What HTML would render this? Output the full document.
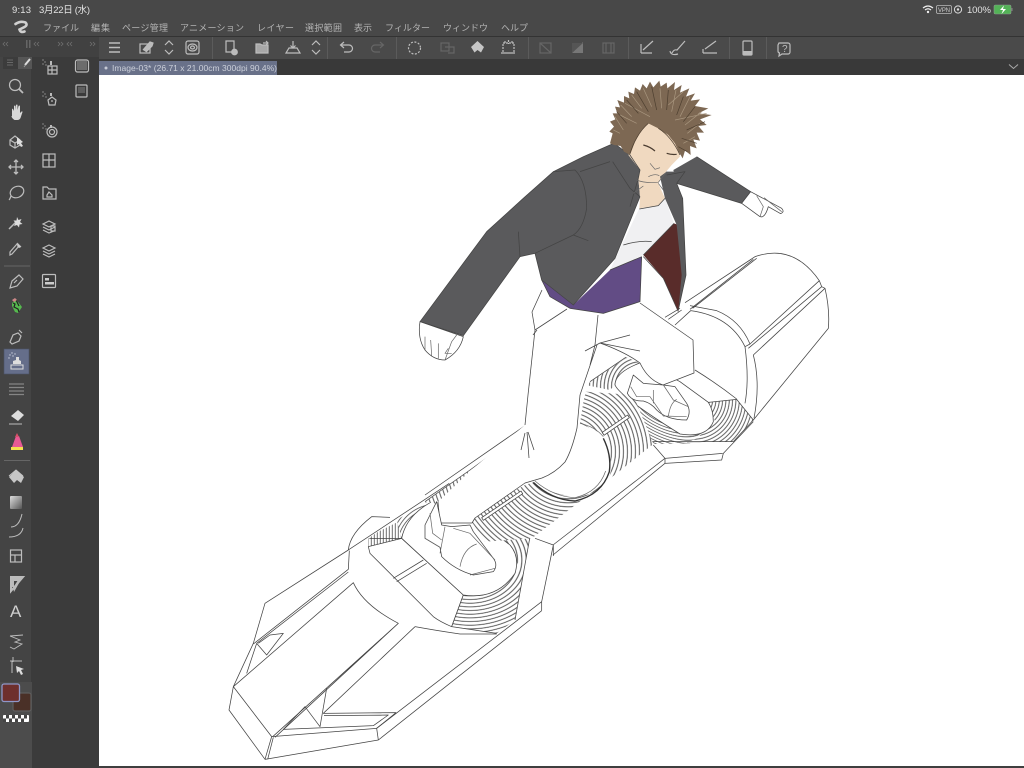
<!DOCTYPE html>
<html lang="ja"><head><meta charset="utf-8"><title>Clip Studio Paint</title>
<style>html,body{margin:0;padding:0;background:#3b3b3b;overflow:hidden}svg{display:block}
text{font-family:"Liberation Sans","Noto Sans CJK JP",sans-serif}
.i{fill:none;stroke:#bdbdbd;stroke-width:1.2}.d{fill:none;stroke:#666;stroke-width:1.2}.f{fill:#c4c4c4}
.b *{vector-effect:non-scaling-stroke}.b path,.b polygon{stroke:#444;stroke-width:.75;fill:none;stroke-linejoin:round}
.b .w{fill:#fff}.b .n{stroke:none}.b .l{stroke:#666;stroke-width:.7}</style></head><body>
<svg width="1024" height="768" viewBox="0 0 1024 768" xmlns="http://www.w3.org/2000/svg">
<defs>
<radialGradient id="r1" gradientUnits="userSpaceOnUse" cx="0" cy="0" r="8" spreadMethod="repeat" gradientTransform="translate(490 490) rotate(30) scale(1.9 1)"><stop offset=".5" stop-color="#fff"/><stop offset=".8" stop-color="#444"/><stop offset="1" stop-color="#fff"/></radialGradient>
<radialGradient id="r1b" gradientUnits="userSpaceOnUse" cx="580" cy="480" r="10" spreadMethod="repeat"><stop offset=".5" stop-color="#fff"/><stop offset=".8" stop-color="#444"/><stop offset="1" stop-color="#fff"/></radialGradient>
<radialGradient id="r1c" gradientUnits="userSpaceOnUse" cx="420" cy="440" r="11" spreadMethod="repeat"><stop offset=".5" stop-color="#fff"/><stop offset=".8" stop-color="#444"/><stop offset="1" stop-color="#fff"/></radialGradient>
<radialGradient id="r2" gradientUnits="userSpaceOnUse" cx="430" cy="170" r="12" spreadMethod="repeat"><stop offset=".55" stop-color="#fff"/><stop offset=".8" stop-color="#444"/><stop offset="1" stop-color="#fff"/></radialGradient>
<radialGradient id="r3" gradientUnits="userSpaceOnUse" cx="0" cy="0" r="11" spreadMethod="repeat" gradientTransform="translate(420 270) scale(1.2 1)"><stop offset=".55" stop-color="#fff"/><stop offset=".8" stop-color="#444"/><stop offset="1" stop-color="#fff"/></radialGradient>
<radialGradient id="r5" gradientUnits="userSpaceOnUse" cx="320" cy="230" r="10" spreadMethod="repeat"><stop offset=".55" stop-color="#fff"/><stop offset=".8" stop-color="#444"/><stop offset="1" stop-color="#fff"/></radialGradient>
<linearGradient id="l1" gradientUnits="userSpaceOnUse" x1="0" y1="0" x2="9" y2="0" spreadMethod="repeat"><stop offset=".5" stop-color="#fff"/><stop offset=".8" stop-color="#444"/><stop offset="1" stop-color="#fff"/></linearGradient>
<linearGradient id="gr" x1="0" y1="0" x2="1" y2="1"><stop offset="0" stop-color="#ddd"/><stop offset="1" stop-color="#555"/></linearGradient>
<filter id="sf" x="-5%" y="-5%" width="110%" height="110%"><feGaussianBlur stdDeviation=".35"/></filter>
</defs>

<!-- chrome -->
<rect width="1024" height="768" fill="#3b3b3b"/>
<rect width="1024" height="36" fill="#484848"/>
<rect y="36" width="1024" height="1" fill="#333"/>
<rect x="0" y="37" width="99" height="20" fill="#414141"/>
<rect x="99" y="37" width="925" height="22" fill="#4a4a4a"/>
<rect x="99" y="59" width="925" height="16" fill="#393939"/>
<rect x="0" y="57" width="31" height="711" fill="#444"/>
<rect x="31" y="57" width="68" height="711" fill="#3b3b3b"/>
<rect x="0" y="682" width="32" height="86" fill="#4c4c4c"/>
<rect x="99" y="75" width="925" height="691" fill="#fff"/>
<rect x="99" y="766" width="925" height="2" fill="#3f3f3f"/>

<!-- status bar -->
<text x="12" y="13" font-size="9.5" fill="#e2e2e2" textLength="19">9:13</text>
<text x="39" y="13" font-size="9.5" fill="#e2e2e2" textLength="51">3月22日 (水)</text>
<text x="967" y="13" font-size="9.5" fill="#e2e2e2" textLength="24">100%</text>
<path d="M923 8q5-4 10 0M925 10q3-2.500 6 0" fill="none" stroke="#eee" stroke-width="1.200"/><circle cx="928" cy="12" r="1.200" fill="#eee"/>
<rect x="936.500" y="5.500" width="15" height="8" rx="1.500" fill="none" stroke="#bbb" stroke-width=".8"/>
<text x="938" y="12" font-size="6" fill="#ccc" textLength="12">VPN</text>
<circle cx="958" cy="9.500" r="3.600" fill="none" stroke="#ddd"/><circle cx="958" cy="9.500" r="1.200" fill="#ddd"/>
<rect x="994" y="5" width="17" height="9" rx="1.500" fill="#53b257" stroke="#8a9a8a" stroke-width=".6"/><rect x="1011.500" y="8" width="1" height="3" fill="#888"/>
<path d="M1004 5.500l-4 4.500h3l-1.500 4 4.500-5h-3z" fill="#fff"/>

<!-- logo and menu -->
<path d="M15.500 24q5-3.500 10-1.500 2.500 2.500-1 4.500l-5 2.500q1 3.500 5 2" fill="none" stroke="#d0d0d0" stroke-width="2.600" stroke-linecap="round"/>
<g font-size="9" fill="#b4b4b4">
<text x="43" y="31" textLength="36">ファイル</text><text x="91" y="31" textLength="19">編集</text><text x="122" y="31" textLength="46">ページ管理</text><text x="180" y="31" textLength="64">アニメーション</text><text x="257" y="31" textLength="37">レイヤー</text><text x="305" y="31" textLength="37">選択範囲</text><text x="354" y="31" textLength="18">表示</text><text x="385" y="31" textLength="45">フィルター</text><text x="443" y="31" textLength="45">ウィンドウ</text><text x="501" y="31" textLength="27">ヘルプ</text>
</g>

<!-- panel headers -->
<g fill="none" stroke="#6f6f6f" stroke-width=".8">
<path d="M5 42l-2 2 2 2M8 42l-2 2 2 2M36 42l-2 2 2 2M39 42l-2 2 2 2M58 42l2 2-2 2M61 42l2 2-2 2M69 42l-2 2 2 2M72 42l-2 2 2 2M90 42l2 2-2 2M93 42l2 2-2 2"/>
</g>
<rect x="26" y="40" width="1.500" height="8" fill="#666"/><rect x="29" y="40" width="1.500" height="8" fill="#666"/>
<rect x="3" y="57" width="15" height="12" fill="#3c3c3c"/><rect x="18" y="57" width="14" height="12" fill="#565656"/>
<path d="M7 60h6M7 62.500h6M7 65h6" stroke="#777" stroke-width=".8"/>
<path d="M25 65l5-6" stroke="#ddd" stroke-width="2"/><path d="M24 67l1.500-2" stroke="#999" stroke-width="1"/>

<!-- toolbar -->
<g fill="#5b5b5b"><rect x="212" y="37" width="1" height="22"/><rect x="327" y="37" width="1" height="22"/><rect x="396" y="37" width="1" height="22"/><rect x="528" y="37" width="1" height="22"/><rect x="628" y="37" width="1" height="22"/><rect x="729" y="37" width="1" height="22"/><rect x="766" y="37" width="1" height="22"/></g>
<g class="i">
<path d="M109 43h11M109 47.500h11M109 52h11" stroke-width="1.500"/>
<rect x="140" y="44" width="10" height="9"/><path d="M143 50l7-8 3 1-1 3-6 6" fill="#bbb"/>
<path d="M165 45l4-4 4 4M165 50l4 4 4-4"/>
<rect x="186" y="41" width="13" height="13" rx="2"/><ellipse cx="192.500" cy="47.500" rx="4.500" ry="3.500"/><ellipse cx="192.500" cy="47.500" rx="2" ry="1.500"/>
<path d="M232 52h-6V41h8v8"/><circle cx="234.500" cy="52" r="2.800" fill="#bbb"/>
<path d="M256 44v9h12v-8h-6l-2-1z" fill="#a8a8a8"/><path d="M263 43h5m-2-2l2 2-2 2"/>
<path d="M286 53h14l-3-5h-8zM293 41v7m-2.500-2.500l2.500 2.500 2.500-2.500"/>
<path d="M312 45l4-4 4 4M312 50l4 4 4-4"/>
<path d="M341 45h8a3.500 3.500 0 010 7h-5M344 42l-3.500 3 3.500 3"/>
</g>
<g class="d"><path d="M383 45h-8a3.500 3.500 0 000 7h5M380 42l3.500 3-3.500 3"/>
<rect x="441" y="43" width="8" height="8"/><path d="M445 47h9v6h-6"/>
<rect x="540" y="43" width="11" height="10"/><path d="M540 43l11 10"/>
<rect x="603" y="43" width="11" height="10"/><path d="M606 43v10M611 43v10"/></g>
<path d="M572 53l11-11v11z" fill="#777"/><path d="M572 43h11l-11 10z" fill="#555"/>
<g class="i">
<circle cx="414.500" cy="48" r="6" stroke-dasharray="2 1.500"/>
<path d="M503 43h11v10h-11zM508.500 40v4M501 53h15M505 43v-3M512 43v-3" stroke-dasharray="2 1"/>
<path d="M641 53V44M641 53h11M643 50l10-9"/>
<path d="M672 53q2-4 5-3l8-9M670 51q1 5 8 3" />
<path d="M703 53h14M705 49l11-8M703 53v-4"/>
<rect x="743" y="41" width="9" height="14" rx="1"/>
<path d="M779 44h9a2 2 0 012 2v7a2 2 0 01-2 2h-6l-3 2 .5-3a2 2 0 01-1.500-2v-6z" transform="translate(0 -1)"/>
</g>
<path d="M471 47l6.500-6 6.500 6-3 5.500-3.500-2.500-3 2.500z" fill="#c6c6c6"/>
<rect x="743" y="51" width="9" height="4" fill="#bbb"/>
<text x="782" y="52" font-size="10" fill="#bdbdbd">?</text>
<path d="M1009 64.500l4.500 4 4.500-4" fill="none" stroke="#aaa"/>

<!-- tab -->
<rect x="99" y="61" width="178" height="14" fill="#697189"/>
<circle cx="106" cy="68" r="1.500" fill="#c6cad5"/>
<text x="112" y="71" font-size="8.500" fill="#ccd0da" textLength="165">Image-03* (26.71 x 21.00cm 300dpi 90.4%)</text>

<!-- tool column -->
<rect x="4" y="349" width="25" height="25" fill="#656e8a" stroke="#4a5066" stroke-width=".6"/>
<rect x="4" y="265.500" width="26" height="1" fill="#666"/><rect x="4" y="460" width="26" height="1" fill="#666"/>
<g class="i">
<circle cx="15" cy="85" r="5.500"/><path d="M19 89l4 4" stroke-width="1.800"/>
<path d="M10 140l5-4 5 4v5l-5 3-5-3zM10 140l5 3 5-3M15 143v5"/>
<path d="M16 160v14M9 167h14M14 162l2-2 2 2M14 172l2 2 2-2M11 165l-2 2 2 2M21 165l2 2-2 2" stroke-width="1.300"/>
<ellipse cx="17" cy="192" rx="7" ry="5.500" transform="rotate(-25 17 192)"/><path d="M11 196q-1 3-2 4"/>
<path d="M9 229l8-8" stroke-width="1.500"/>
<path d="M10 255l2-1 7-8-2-2-7 8zM17 243l4 4" />
<path d="M10 288l2-7 7-6 4 4-6 7z"/><path d="M14 283l3-3"/>
<path d="M10 342l3-7 5-2 3 3-2 5-7 3zM19 330l3 3"/>
<path d="M9 384h15M9 387.500h15M9 391h15M9 394.500h15" stroke="#858585" stroke-width="1.300"/>
<path d="M9 424h13" stroke-width="1"/>
<path d="M12 524q8 0 11-13M10 534q12 0 14-9" transform="translate(-1 3)" stroke-width="1"/>
<rect x="10.500" y="550" width="11" height="12" /><path d="M10.500 555h11M15 555v7"/>
<path d="M11 591v-14h12zM13 587v-7h6" stroke-width="2"/>
<path d="M10 636l10 4-5 2 7 2-8 5-4-2M10 636l13-1" stroke-width=".9"/>
<path d="M12 661v12M10 661h12M13 657v5" stroke-width="1"/>
</g>
<path d="M12 116v-6q0-2 1-1l1 2v-5q1-1 1.500 0l.5 4v-5q1-1 1.500 0v5l1-4q1-1 1.500 0v7l1.500-1.500q1-.5 1 .5l-2 6q-1 2-3 2h-3q-3-2-3-4z" fill="#d8d8d8"/>
<path d="M17 137l6 5-2 1 2 3-2 1-2-3-2 1z" fill="#ddd"/>
<path d="M17 217l1.500 3 3-1-1.500 3 2.500 2-3 .5-.5 3-2-2.500-3 1 1.500-3-2-2.500 3 0z" fill="#ddd"/>
<path d="M18 244l3 3-2 1-2-2z" fill="#ccc"/>
<path d="M12 303l4-3 3 3 3 4-2 3-2 3-3-1-3-6z" fill="#55b84e"/><path d="M13 303l2 1-1 3 4 2 1 3M16 300l3 6" stroke="#222" stroke-width="1.200" fill="none"/>
<path d="M12 300l3-2 2 2-3 2z" fill="#c88"/>
<path d="M16 357h3v3l2 1v3h-8v-3l3-1z" fill="#ddd"/><rect x="11" y="365" width="12" height="4" fill="none" stroke="#ddd"/>
<g fill="#c8cddb"><circle cx="10" cy="355" r=".7"/><circle cx="12" cy="353" r=".7"/><circle cx="9" cy="358" r=".7"/><circle cx="13" cy="356" r=".7"/><circle cx="15" cy="354" r=".7"/></g>
<path d="M11 416l7-6 6 5-6 6z" fill="#ddd"/>
<path d="M12 447l4-11 3 0 4 11z" fill="#e85a94"/><path d="M11 447h12v3H11z" fill="#f3e04f"/><path d="M15 437l2-4 2 4z" fill="#d8506a"/>
<path d="M9 477l7-7 8 7-3 6-4-3-3 3z" fill="#c6c6c6"/><path d="M9 476l7-6 7 6" stroke="#c6c6c6" fill="none"/>
<rect x="10" y="496" width="12" height="13" rx="1" fill="url(#gr)"/>
<path d="M11 578l12-2-9 16zM14 581l-1 7 5-8z" fill="#bbb" fill-rule="evenodd"/>
<text x="10" y="617" font-size="17" fill="#cfcfcf">A</text>
<path d="M16 666l8 3-3 1 2 4-2 1-2-4-2 2z" fill="#ddd"/>

<!-- color -->
<rect x="13" y="693" width="18" height="18" rx="2" fill="#4a3027" stroke="#5e5e5e" stroke-width="1.200"/>
<rect x="2" y="684" width="17.500" height="17.500" rx="2" fill="#6e2f2d" stroke="#8e97c9" stroke-width="1.300"/>
<rect x="3" y="715" width="26" height="7" rx="1" fill="#fff"/>
<path d="M6 715h3v3.500H6zM12 715h3v3.500h-3zM18 715h3v3.500h-3zM24 715h3v3.500h-3zM3 718.500h3V722H3zM9 718.500h3V722H9zM15 718.500h3V722h-3zM21 718.500h3V722h-3z" fill="#444"/>

<!-- subtool icons -->
<g class="i" stroke-width="1">
<rect x="48" y="66" width="9" height="8"/><path d="M48 70h9M52 66v8"/>
<path d="M48 100l4-3 4 3-1 5h-6zM52 100v2"/>
<circle cx="52" cy="132" r="5"/><circle cx="52" cy="132" r="2.500"/>
<rect x="43" y="154" width="12" height="13"/><path d="M49 154v13M43 160h12"/>
<path d="M43 187h4l2 2h7v10H43z"/><path d="M49 192l3 3v2h-5v-2z"/>
<path d="M43 224l6-3 6 3-6 3zM43 227l6 3 6-3M43 230l6 3 5-2"/><rect x="51" y="226" width="4" height="5"/>
<path d="M43 248l6-3 6 3-6 3zM43 251l6 3 6-3M43 254l6 3 6-3"/>
<rect x="42.500" y="274.500" width="13" height="13" rx="1"/>
<rect x="75.500" y="60" width="13" height="12" rx="2"/>
<rect x="76" y="85" width="11" height="12" rx="1"/>
</g>
<rect x="45" y="278" width="4" height="2.500" fill="#ccc"/><rect x="45" y="282" width="9" height="2.500" fill="#ccc"/>
<rect x="77" y="61" width="10" height="9" fill="#6c6c6c"/><rect x="78" y="87" width="7" height="6" fill="#5e5e5e"/>
<g fill="#bbb"><circle cx="43" cy="60" r=".6"/><circle cx="45" cy="62" r=".6"/><circle cx="43" cy="64" r=".6"/><circle cx="46" cy="65" r=".6"/><rect x="50" y="61" width="2" height="4"/>
<circle cx="43" cy="92" r=".6"/><circle cx="45" cy="94" r=".6"/><circle cx="43" cy="96" r=".6"/><circle cx="46" cy="97" r=".6"/><rect x="50" y="93" width="2" height="3"/>
<circle cx="43" cy="124" r=".6"/><circle cx="45" cy="126" r=".6"/><circle cx="43" cy="128" r=".6"/><circle cx="46" cy="129" r=".6"/><rect x="50" y="125" width="2" height="3"/></g>

<!-- board rear (zoom 8 coordinates) -->
<g class="b" transform="translate(500 240) scale(.33333)">
<path d="M495,232 L540,205 M555,188 L750,60 L765,50 Q880,10 958,122 L750,312 Q720,240 650,212 L570,197"/>
<path d="M570,208 L760,58 M578,205 L770,55"/>
<path d="M958,122 L965,140 L745,325 M750,312 L735,320 M975,145 L760,345 M965,140 L975,145 Q990,210 985,265 L760,540"/>
<path d="M760,345 Q782,430 762,535 M735,320 Q748,420 735,490"/>
<path d="M525,255 L572,212 Q690,228 735,320 M505,238 L545,210"/>
<path d="M585,390 Q650,430 710,477"/>
<path class="n" style="fill:url(#r1)" d="M345,435 L400,500 L460,610 L465,612 L570,610 L640,545 L600,470 L430,350 L430,365Z"/>
<path class="n" style="fill:url(#r1b)" d="M560,607 L700,605 L760,540 L710,478 L625,487 L645,545 L590,595Z"/>
<path class="n" style="fill:url(#r1c)" d="M265,430 L395,342 L430,350 L430,365 L345,435 L330,450 L262,436Z"/>
<path d="M270,425 L395,340"/>
<path class="w" d="M430,365 Q345,395 345,435 Q360,470 540,582 Q620,595 640,545 Q640,510 625,487 L540,425 Z"/>
<path d="M625,487 L710,478 L760,540 L700,605 M455,605 L700,605"/>
<path d="M760,545 L670,640 L665,660 L495,670 L495,655 L460,615 M668,640 L495,655 M495,655 L159,915 M495,670 L159,945"/>
</g>

<!-- board front (zoom 9 coordinates) -->
<g class="b" transform="translate(220 480) scale(.33333)">
<path d="M40,620 L27,690 L135,838 L475,780 L965,392 M135,838 L155,770 L40,620 M143,838 L160,772"/>
<path d="M155,770 L470,745 L475,780 M470,745 L965,365 L965,392 M965,365 L1000,195 L945,175 M1000,195 L1000,228"/>
<path d="M40,620 L100,490 L135,370 L385,210 Q390,160 455,110 L510,112 M385,210 L688,10"/>
<path d="M100,492 L385,268 M110,490 L385,276 M385,268 L388,212 M80,580 L110,490 M110,490 L140,525 L190,460 L150,465 L115,490"/>
<path d="M40,620 L400,308 Q430,375 535,430 L158,770 M535,430 L165,772"/>
<path d="M585,440 L310,700 L528,698 L470,745 M312,707 L505,705 L460,737 L190,748 L255,680 L300,740 L320,625"/>
<path d="M585,440 Q650,452 720,462 L830,462"/>
<path d="M530,292 L610,240 M536,304 L618,250"/>
</g>

<!-- front pad (zoom 10 coordinates) -->
<g class="b" transform="translate(330 470) scale(.33333)">
<path class="n" style="fill:url(#l1)" d="M115,205 L145,185 L215,150 L215,205 L115,230Z"/>
<path class="n" style="fill:url(#r5)" d="M200,150 L320,78 L325,100 L250,135 L215,205Z"/>
<path d="M118,205 L215,205"/>
<path class="w" d="M115,230 L215,205 L400,375 L365,470 Q330,455 310,440 L120,250Z"/>
<path class="n" style="fill:url(#r3)" d="M400,375 L365,470 L500,490 L555,450 L600,205 L465,150 L430,140 L540,225 L570,300Z"/>
<path class="w" d="M215,205 Q230,130 320,88 L430,140 L540,225 Q570,260 555,310 Q500,390 400,375Z"/>
<path d="M400,375 L365,470 M365,470 L500,490 M600,200 L555,450"/>
<path d="M190,325 L280,270 M200,335 L290,280"/>
</g>

<!-- mid disc (zoom 11 coordinates) -->
<g class="b" transform="translate(425 395) scale(.33333)">
<path class="n" style="fill:url(#r2)" d="M145,355 L300,270 L325,262 Q430,330 530,285 Q565,240 557,200 L550,125 L465,85 L480,-10 L625,0 L685,147 L575,235 L320,430 L180,440 L140,380Z"/>
<path class="n" style="fill:url(#r2)" d="M0,322 L135,225 L142,232 L45,320 L30,325Z"/>
<path d="M0,300 L300,92 M0,320 L135,225 L303,102"/>
<path class="l" d="M465,85 Q510,95 535,125"/>
<polygon class="w" points="170,368 288,288 293,296 175,376"/>
<polygon class="w" points="532,112 608,60 613,68 537,121"/>
<path style="stroke:#333;stroke-width:1.400" d="M325,262 Q380,315 450,318 Q530,300 553,230 Q560,180 535,130"/>
<path class="l" d="M330,258 Q385,305 450,308 Q520,292 542,228"/>
</g>

<!-- pants (original coordinates) -->
<g class="b">
<path class="w n" d="M542,290 L532,312 L535,330 L528,395 L525,425 L470,471 L438,502 L440,523 L472,523 L475,518 L525,483 L542,478 L565,462 L577,428 L597,345 L640,363 L663,385 L694,373 L693,340 L640,303 L612,305Z"/>
<path d="M542,290 L532,312 L535,330 L528,395 L525,425 M527,432 L529,458 M525,433 L521,450 M528,432 L534,450"/>
<path d="M580,395 L577,428 Q572,450 565,462 Q555,473 542,478 L525,483 L475,518 L472,523 L440,523 L438,502"/>
<path d="M597,345 L580,395 M598,315 L595,345 L590,365 M585,351 L600,343 L630,335 M600,343 L640,351 M535,330 L567,309 M533,335 L537,330"/>
<path d="M640,303 L693,340 L694,373 L663,385 Q648,380 640,363 Q625,352 600,343"/>
</g>

<!-- character (zoom 7 coordinates) -->
<g class="b" transform="translate(410 75) scale(.33333)">
<!-- jacket -->
<path class="n" style="fill:#5a5a5c" d="M30,740 L230,470 L340,370 L430,290 L520,245 L600,210 L612,205 L660,240 L690,285 L685,310 L690,365 L615,550 L490,690 L395,615 L375,535 L330,545 L160,782Z"/>
<path class="n" style="fill:#f0f0f2" d="M688,400 L745,392 L765,370 L792,445 L700,540 L600,585 L640,500Z"/>
<path class="n" style="fill:#624c85" d="M395,615 L490,690 L600,585 L695,545 L690,680 L580,715 L480,700 L420,665Z"/>
<path class="n" style="fill:#592c2a" d="M792,445 L700,540 L760,610 L805,710 L822,600 L805,450Z"/>
<path class="n" style="fill:#5a5a5c" d="M860,245 L1022,350 L995,385 L800,325 L790,285Z"/>
<path class="n" style="fill:#f0d9c0" d="M655,240 L670,200 L720,130 L790,180 L810,245 L785,270 L760,300 L745,325 L765,370 L745,392 L688,400 L690,365 L685,310 L690,285Z"/>
<path class="n" style="fill:#5a5a5c" d="M750,305 L770,290 L825,290 L800,325 L818,370 L828,600 L805,705 L815,600 L800,450 L765,370Z"/>
<!-- jacket lines -->
<path d="M30,740 L230,470 L340,370 L430,290 L520,245 L600,210 M30,740 L160,782 L330,545 L375,535 L395,615 L490,690 L615,550 L690,365"/>
<path d="M600,210 L612,205 L660,240 L690,285 L685,310 L660,395 M608,260 L660,340 L690,365 M430,290 L495,285 Q530,320 530,400 Q520,460 490,480 L375,535 M330,545 L325,470 M490,480 L535,497 M510,290 L600,260"/>
<path d="M800,325 L818,370 L828,600 L805,705 M770,300 L825,290 L800,325 M860,245 L1022,350 L995,385 L800,325"/>
<path d="M395,615 L420,665 L480,700 L580,715 L690,680 L695,545 M600,585 L695,545 M700,540 L792,445"/>
<path d="M700,545 L760,610 L805,710 M688,402 L745,392 L765,370 M640,510 Q690,495 725,500"/>
<!-- face -->
<path class="l" d="M680,315 Q700,325 745,322 L770,290 M700,333 L670,355 M745,325 L762,348 M715,305 Q735,295 748,302 M720,265 L735,283 L750,278"/>
<path style="stroke:#4a3c30;stroke-width:1.200" d="M700,210 Q720,215 735,228 M770,235 Q785,240 800,238"/>
<!-- hair -->
<g transform="translate(570 15)" filter="url(#sf)">
<polygon class="n" style="fill:#7d6852" points="30,190 38,160 28,155 42,140 30,125 46,118 38,100 52,100 45,80 60,82 52,60 72,68 72,48 88,55 85,35 102,42 105,22 120,32 128,12 140,25 150,5 160,22 178,2 182,20 200,8 202,25 225,6 222,30 245,15 240,38 268,25 258,50 285,40 272,62 300,58 285,78 325,85 295,100 335,105 300,118 320,135 295,138 312,158 290,158 300,182 280,178 290,205 270,198 272,225 255,212 248,235 236,215 225,190 205,165 175,145 145,130 125,150 105,185 90,225 72,215 62,198 42,195"/>
<path style="stroke:#a8967f;stroke-width:.7;fill:none" d="M70,150 L45,110 M95,110 L62,75 M125,85 L95,45 M155,80 L130,25 M185,85 L180,25 M215,95 L228,30 M240,110 L270,50 M255,135 L305,95 M262,160 L300,130 M250,190 L285,170 M60,160 L40,150 M110,130 L60,105 M150,110 L75,70 M205,75 L250,35 M225,120 L320,100"/>
<path style="stroke:#4e3f30;stroke-width:.7;fill:none" d="M80,130 L50,95 M115,100 L80,60 M145,95 L110,35 M170,90 L155,20 M200,90 L205,30 M230,105 L250,50 M250,125 L285,80 M260,150 L315,125 M245,175 L290,190 M235,200 L262,215 M145,130 Q110,160 90,220 M175,145 Q215,170 240,225"/>
</g>
<!-- hands -->
<path class="w" d="M30,740 Q22,790 45,825 Q70,855 105,855 Q150,830 160,785 L30,740Z"/>
<path class="l" d="M45,825 L45,785 M65,842 L62,795 M85,850 L85,805 M105,855 L125,800 L140,780 M115,820 L105,835 L125,835"/>
<path class="w" d="M1022,350 L1115,400 Q1125,410 1112,416 L1075,395 Q1065,430 1050,425 L995,385Z"/>
<path class="l" d="M1040,362 L1060,395 L1050,425 M1062,368 L1115,410"/>
</g>

<!-- shoes -->
<g class="b" transform="translate(500 240) scale(.33333)">
<path class="w" d="M400,405 L382,460 Q395,485 430,483 Q455,490 470,510 Q500,540 560,540 Q575,515 560,490 L525,440 L490,435 L430,430Z"/>
<path class="l" d="M392,440 L410,470 L450,470 L490,528 L560,530 M460,450 L460,490 M505,530 Q510,490 530,478 M490,435 L520,480 L565,500"/>
</g>
<g class="b" transform="translate(330 470) scale(.33333)">
<path class="w" d="M320,95 L285,165 L285,205 L330,232 L335,260 Q375,300 430,315 L490,305 Q505,285 490,265 L430,185 L420,165 L365,170 L335,165Z"/>
<path class="l" d="M285,205 L330,232 M300,130 L308,190 L335,210 M345,170 L330,250 M390,290 Q400,235 440,222 M370,175 L420,190 L495,270 M420,315 L495,295"/>
</g>
</svg>
</body></html>
